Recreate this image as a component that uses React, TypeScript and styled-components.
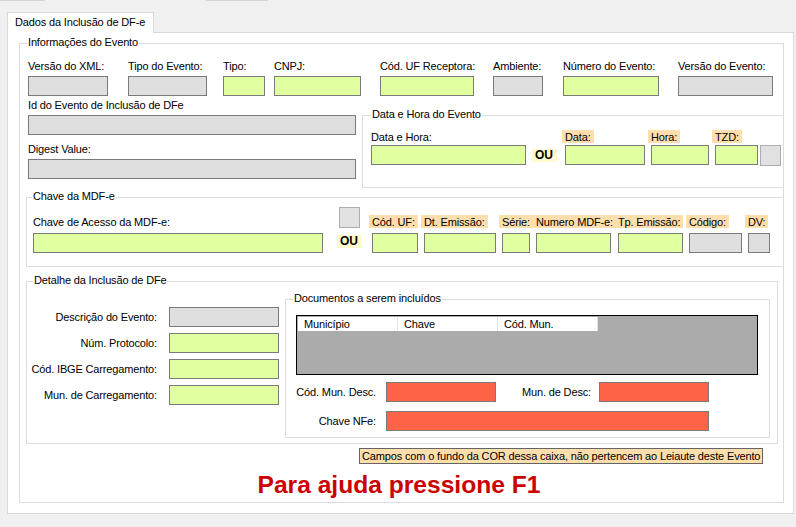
import styled, { createGlobalStyle } from 'styled-components';

type Tone = 'gray' | 'green' | 'red';

const TONES: Record<Tone, string> = {
  gray: '#dfdfdf',
  green: '#e0ffa0',
  red: '#ff6347',
};

export default function App() {
  return (
    <>
      <GlobalStyle />
      <Screen>
        <TopStrip>
          <StripMark $w={45} />
          <StripMark $w={62} $ml={161} />
        </TopStrip>
        <TabBar>
          <TabHeader>Dados da Inclusão de DF-e</TabHeader>
        </TabBar>
        <TabPage>
          <EventGroup>
            <GroupTitle>Informações do Evento</GroupTitle>

            <FieldRow $ml={2}>
              <Field $w={80}>
                <Label>Versão do XML:</Label>
                <TextBox $tone="gray" />
              </Field>
              <Field $w={79} $ml={20}>
                <Label>Tipo do Evento:</Label>
                <TextBox $tone="gray" />
              </Field>
              <Field $w={42} $ml={16}>
                <Label>Tipo:</Label>
                <TextBox $tone="green" />
              </Field>
              <Field $w={87} $ml={9}>
                <Label>CNPJ:</Label>
                <TextBox $tone="green" />
              </Field>
              <Field $w={94} $ml={19}>
                <Label>Cód. UF Receptora:</Label>
                <TextBox $tone="green" />
              </Field>
              <Field $w={50} $ml={19}>
                <Label>Ambiente:</Label>
                <TextBox $tone="gray" />
              </Field>
              <Field $w={96} $ml={20}>
                <Label>Número do Evento:</Label>
                <TextBox $tone="green" />
              </Field>
              <Field $w={95} $ml={19}>
                <Label>Versão do Evento:</Label>
                <TextBox $tone="gray" />
              </Field>
            </FieldRow>

            <MiddleRow>
              <IdColumn>
                <Field $w={328}>
                  <Label>Id do Evento de Inclusão de DFe</Label>
                  <TextBox $tone="gray" />
                </Field>
                <Field $w={328}>
                  <Label>Digest Value:</Label>
                  <TextBox $tone="gray" />
                </Field>
              </IdColumn>

              <DateGroup>
                <GroupTitle $left={8}>Data e Hora do Evento</GroupTitle>
                <FieldRow>
                  <Field $w={155} $gap={1}>
                    <Label>Data e Hora:</Label>
                    <TextBox $tone="green" />
                  </Field>
                  <OrBadge $ml={6} $mb={3}>OU</OrBadge>
                  <Field $w={80} $ml={8} $gap={1}>
                    <PeachLabel>Data:</PeachLabel>
                    <TextBox $tone="green" />
                  </Field>
                  <Field $w={58} $ml={6} $gap={1}>
                    <PeachLabel>Hora:</PeachLabel>
                    <TextBox $tone="green" />
                  </Field>
                  <Field $w={43} $ml={6} $gap={1}>
                    <PeachLabel>TZD:</PeachLabel>
                    <TextBox $tone="green" />
                  </Field>
                  <Square $ml={2} $mb={-1} />
                </FieldRow>
              </DateGroup>
            </MiddleRow>

            <KeyGroup>
              <GroupTitle $left={5}>Chave da MDF-e</GroupTitle>
              <Field $w={290} $gap={4}>
                <Label>Chave de Acesso da MDF-e:</Label>
                <TextBox $tone="green" />
              </Field>
              <OrColumn>
                <Square $ml={2} $mb={7} />
                <OrBadge $mb={5}>OU</OrBadge>
              </OrColumn>
              <Field $w={46} $ml={10} $gap={4}>
                <PeachLabel>Cód. UF:</PeachLabel>
                <TextBox $tone="green" />
              </Field>
              <Field $w={72} $ml={6} $gap={4}>
                <PeachLabel>Dt. Emissão:</PeachLabel>
                <TextBox $tone="green" />
              </Field>
              <Field $w={28} $ml={6} $gap={4}>
                <PeachLabel>Série:</PeachLabel>
                <TextBox $tone="green" />
              </Field>
              <Field $w={75} $ml={6} $gap={4}>
                <PeachLabel>Numero MDF-e:</PeachLabel>
                <TextBox $tone="green" />
              </Field>
              <Field $w={65} $ml={7} $gap={4}>
                <PeachLabel>Tp. Emissão:</PeachLabel>
                <TextBox $tone="green" />
              </Field>
              <Field $w={53} $ml={6} $gap={4}>
                <PeachLabel>Código:</PeachLabel>
                <TextBox $tone="gray" />
              </Field>
              <Field $w={22} $ml={6} $gap={4}>
                <PeachLabel>DV:</PeachLabel>
                <TextBox $tone="gray" />
              </Field>
            </KeyGroup>

            <DetailGroup>
              <GroupTitle $left={6}>Detalhe da Inclusão de DFe</GroupTitle>
              <DetailGrid>
                <SideLabel>Descrição do Evento:</SideLabel>
                <TextBox $tone="gray" />
                <SideLabel>Núm. Protocolo:</SideLabel>
                <TextBox $tone="green" />
                <SideLabel>Cód. IBGE Carregamento:</SideLabel>
                <TextBox $tone="green" />
                <SideLabel>Mun. de Carregamento:</SideLabel>
                <TextBox $tone="green" />
              </DetailGrid>

              <DocsGroup>
                <GroupTitle>Documentos a serem incluídos</GroupTitle>
                <DataGrid>
                  <HeaderCell>Município</HeaderCell>
                  <HeaderCell>Chave</HeaderCell>
                  <HeaderCell>Cód. Mun.</HeaderCell>
                </DataGrid>
                <DescGrid>
                  <SideLabel $pr={10}>Cód. Mun. Desc.</SideLabel>
                  <TextBox $tone="red" />
                  <SideLabel $pr={8}>Mun. de Desc:</SideLabel>
                  <TextBox $tone="red" />
                  <SideLabel $pr={10}>Chave NFe:</SideLabel>
                  <WideBox $tone="red" />
                </DescGrid>
              </DocsGroup>
            </DetailGroup>

            <Note>Campos com o fundo da COR dessa caixa, não pertencem ao Leiaute deste Evento</Note>
            <HelpText>Para ajuda pressione F1</HelpText>
          </EventGroup>
        </TabPage>
      </Screen>
    </>
  );
}

const GlobalStyle = createGlobalStyle`
  html, body {
    margin: 0;
    padding: 0;
    background: #f0f0f0;
  }
  body {
    font-family: "Liberation Sans", Arial, sans-serif;
    font-size: 11px;
    letter-spacing: -0.15px;
    color: #000;
  }
  * {
    box-sizing: border-box;
  }
`;

const Screen = styled.div`
  display: flex;
  flex-direction: column;
  width: 796px;
  height: 527px;
  background: #f0f0f0;
  overflow: hidden;
`;

const TopStrip = styled.div`
  display: flex;
  height: 1px;
`;

const StripMark = styled.div<{ $w: number; $ml?: number }>`
  width: ${(p) => p.$w}px;
  margin-left: ${(p) => p.$ml ?? 0}px;
  background: #d4d4d4;
`;

const TabBar = styled.div`
  position: relative;
  z-index: 1;
  display: flex;
  padding: 11px 0 0 7px;
`;

const TabHeader = styled.div`
  width: 147px;
  height: 21px;
  padding: 3px 0 0 7px;
  background: #fff;
  border: 1px solid #d9d9d9;
  border-bottom: none;
  line-height: 13px;
  white-space: nowrap;
`;

const TabPage = styled.div`
  width: 787px;
  height: 482px;
  margin: -1px 0 0 7px;
  padding: 10px 0 0 11px;
  background: #fff;
  border: 1px solid #d9d9d9;
`;

const GroupBox = styled.div`
  position: relative;
  border: 1px solid #dcdcdc;
`;

const GroupTitle = styled.span<{ $left?: number }>`
  position: absolute;
  top: -8px;
  left: ${(p) => p.$left ?? 7}px;
  padding: 0 1px;
  background: #fff;
  line-height: 13px;
  white-space: nowrap;
`;

const EventGroup = styled(GroupBox)`
  display: flex;
  flex-direction: column;
  width: 765px;
  height: 460px;
  padding: 16px 0 0 6px;
`;

const FieldRow = styled.div<{ $ml?: number }>`
  display: flex;
  align-items: flex-end;
  margin-left: ${(p) => p.$ml ?? 0}px;
`;

const Field = styled.div<{ $w: number; $ml?: number; $gap?: number }>`
  display: flex;
  flex-direction: column;
  flex: none;
  width: ${(p) => p.$w}px;
  margin-left: ${(p) => p.$ml ?? 0}px;
  gap: ${(p) => p.$gap ?? 3}px;
`;

const Label = styled.div`
  height: 13px;
  line-height: 13px;
  white-space: nowrap;
`;

const PeachLabel = styled.div`
  align-self: flex-start;
  height: 13px;
  margin: -1px 0 1px -3px;
  padding: 1px 3px 0;
  background: #ffdead;
  line-height: 13px;
  white-space: nowrap;
`;

const SideLabel = styled.div<{ $pr?: number }>`
  padding-right: ${(p) => p.$pr ?? 0}px;
  line-height: 13px;
  text-align: right;
  white-space: nowrap;
`;

const TextBox = styled.div<{ $tone: Tone }>`
  height: 20px;
  background: ${(p) => TONES[p.$tone]};
  border: 1px solid #7a7a7a;
`;

const WideBox = styled(TextBox)`
  grid-column: 2 / 5;
`;

const OrBadge = styled.div<{ $ml?: number; $mb?: number }>`
  flex: none;
  width: 25px;
  height: 13px;
  margin-left: ${(p) => p.$ml ?? 0}px;
  margin-bottom: ${(p) => p.$mb ?? 0}px;
  padding-left: 3px;
  background: #fffacd;
  font-size: 12px;
  font-weight: bold;
  line-height: 13px;
  letter-spacing: 0;
`;

const Square = styled.div<{ $ml?: number; $mb?: number }>`
  flex: none;
  width: 21px;
  height: 21px;
  margin-left: ${(p) => p.$ml ?? 0}px;
  margin-bottom: ${(p) => p.$mb ?? 0}px;
  background: #e1e1e1;
  border: 1px solid #adadad;
`;

const MiddleRow = styled.div`
  display: flex;
  align-items: flex-start;
`;

const IdColumn = styled.div`
  display: flex;
  flex-direction: column;
  gap: 8px;
  margin: 3px 0 0 2px;
`;

const DateGroup = styled(GroupBox)`
  flex: 1;
  margin: 19px -1px 0 6px;
  padding: 15px 0 22px 8px;
`;

const KeyGroup = styled(GroupBox)`
  display: flex;
  align-items: flex-end;
  margin: 9px -1px 0 0;
  padding: 9px 0 13px 6px;
`;

const OrColumn = styled.div`
  display: flex;
  flex-direction: column;
  flex: none;
  width: 25px;
  margin-left: 14px;
`;

const DetailGroup = styled(GroupBox)`
  display: flex;
  align-items: flex-start;
  align-self: flex-start;
  width: 752px;
  height: 163px;
  margin-top: 14px;
`;

const DetailGrid = styled.div`
  display: grid;
  grid-template-columns: 130px 110px;
  column-gap: 12px;
  row-gap: 6px;
  align-items: center;
  margin-top: 25px;
`;

const DocsGroup = styled(GroupBox)`
  width: 485px;
  height: 139px;
  margin: 17px 0 0 6px;
  padding: 15px 0 0 10px;
`;

const DataGrid = styled.div`
  display: flex;
  align-items: flex-start;
  width: 462px;
  height: 60px;
  padding: 1px;
  background: #ababab;
  border: 1px solid #000;
`;

const HeaderCell = styled.div`
  width: 100px;
  height: 14px;
  padding-left: 6px;
  background: #fff;
  border-right: 1px solid #e3e3e3;
  line-height: 14px;
  white-space: nowrap;
`;

const DescGrid = styled.div`
  display: grid;
  grid-template-columns: 90px 110px 103px 110px;
  row-gap: 9px;
  align-items: center;
  margin-top: 7px;
`;

const Note = styled.div`
  align-self: flex-end;
  width: 404px;
  height: 16px;
  margin: 4px 20px 0 0;
  padding: 0 2px;
  background: #ffdead;
  border: 1px solid #646464;
  line-height: 14px;
  white-space: nowrap;
  overflow: hidden;
`;

const HelpText = styled.div`
  margin-top: 7px;
  padding-right: 11px;
  color: #cc0000;
  font-size: 24.6px;
  font-weight: bold;
  line-height: 28px;
  letter-spacing: 0;
  text-align: center;
`;
